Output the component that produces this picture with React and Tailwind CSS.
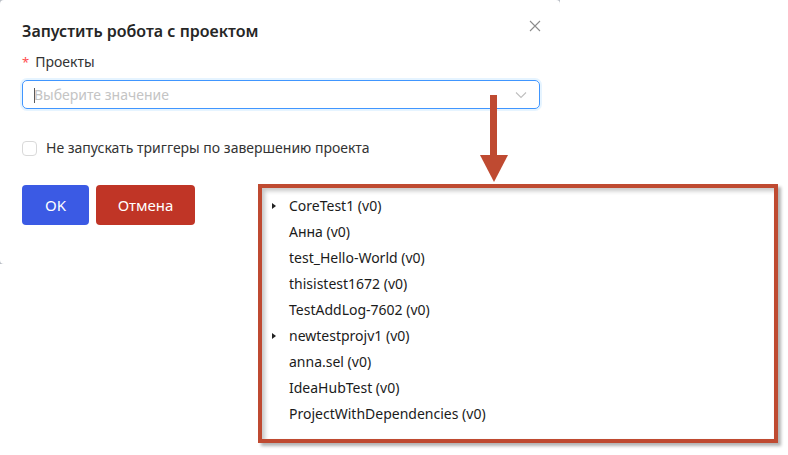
import React from "react";

const projects = [
  { name: "CoreTest1 (v0)", children: true },
  { name: "Анна (v0)" },
  { name: "test_Hello-World (v0)" },
  { name: "thisistest1672 (v0)" },
  { name: "TestAddLog-7602 (v0)" },
  { name: "newtestprojv1 (v0)", children: true },
  { name: "anna.sel (v0)" },
  { name: "IdeaHubTest (v0)" },
  { name: "ProjectWithDependencies (v0)" },
];

const CloseIcon = () => (
  <svg width="12" height="12" viewBox="0 0 12 12" className="text-[#8c8c8c]">
    <path d="M1 1 L11 11 M11 1 L1 11" stroke="currentColor" strokeWidth="1.1" fill="none" />
  </svg>
);

const Chevron = () => (
  <svg width="12" height="8" viewBox="0 0 12 8" className="text-[#bfbfbf]">
    <path d="M1 1.5 L6 6.5 L11 1.5" stroke="currentColor" strokeWidth="1.1" fill="none" />
  </svg>
);

// arrow pointing from the select down to the dropdown tree
const Arrow = () => (
  <svg width="30" height="88" viewBox="0 0 30 88" className="text-[#bf4a31]">
    <rect x="11" y="0" width="7" height="61" fill="currentColor" />
    <path d="M1 60 L29 60 L15 87 Z" fill="currentColor" />
  </svg>
);

const Dialog = () => (
  <div className="w-[560px] h-[264px] bg-[#b9bec5]">
    <div className="w-full h-full bg-white rounded-[4px] pl-[22px] pr-[19px] pt-[19px]">
      <div className="flex items-start justify-between">
        <h2 className="text-[16px] leading-[24px] font-semibold text-[#262626]">
          Запустить робота с проектом
        </h2>
        <span className="mt-[1px]">
          <CloseIcon />
        </span>
      </div>

      <div className="mt-[8px] flex items-center text-[14px] leading-[22px] text-[#333]">
        <span className="text-[#ff4d4f] mr-[6px] text-[13px]">*</span>
        Проекты
      </div>

      <div className="mt-[7px] relative h-[29px] w-[518px] flex items-center justify-between rounded-[5px] border border-[#4096ff] shadow-[0_0_0_2px_rgba(5,145,255,0.1)] pl-[11px] pr-[12px]">
        <span className="text-[14px] text-[#c4c4c4]">Выберите значение</span>
        <span className="absolute left-[11px] top-[7px] h-[15px] w-[1px] bg-[#595959]" />
        <Chevron />
      </div>

      <label className="mt-[28px] flex items-center gap-[9px] text-[14px] leading-[22px] text-[#333]">
        <span className="w-[15px] h-[15px] rounded-[4px] border border-[#d9d9d9] bg-white" />
        Не запускать триггеры по завершению проекта
      </label>

      <div className="mt-[26px] flex gap-[7px]">
        <button className="w-[67px] h-[40px] rounded-[4px] bg-[#3b5ae4] text-white text-[15px]">
          OK
        </button>
        <button className="w-[99px] h-[40px] rounded-[4px] bg-[#c03526] text-white text-[15px]">
          Отмена
        </button>
      </div>
    </div>
  </div>
);

const Tree = () => (
  <div className="absolute left-[258px] top-[184px] w-[520px] h-[259px] border-4 border-[#bf4a31] bg-white shadow-[3px_3px_3px_rgba(0,0,0,0.3)]">
    <div className="h-full shadow-[inset_3px_3px_4px_rgba(0,0,0,0.22)] pt-[4px]">
      {projects.map((p) => (
        <div key={p.name} className="h-[26px] flex items-center text-[14px] text-[#1b1b1b]">
          <span className="w-[27px] pl-[10px] pt-[2px] flex items-center">
            {p.children && (
              <svg width="4" height="6" viewBox="0 0 4 6">
                <path d="M0 0 L4 3 L0 6 Z" fill="#222" />
              </svg>
            )}
          </span>
          {p.name}
        </div>
      ))}
    </div>
  </div>
);

export default function App() {
  return (
    <div
      className="relative w-[788px] h-[455px] bg-white overflow-hidden"
      style={{ fontFamily: '"Noto Sans", "Open Sans", sans-serif' }}
    >
      <Dialog />
      <div className="absolute left-[479px] top-[95px]">
        <Arrow />
      </div>
      <Tree />
    </div>
  );
}
